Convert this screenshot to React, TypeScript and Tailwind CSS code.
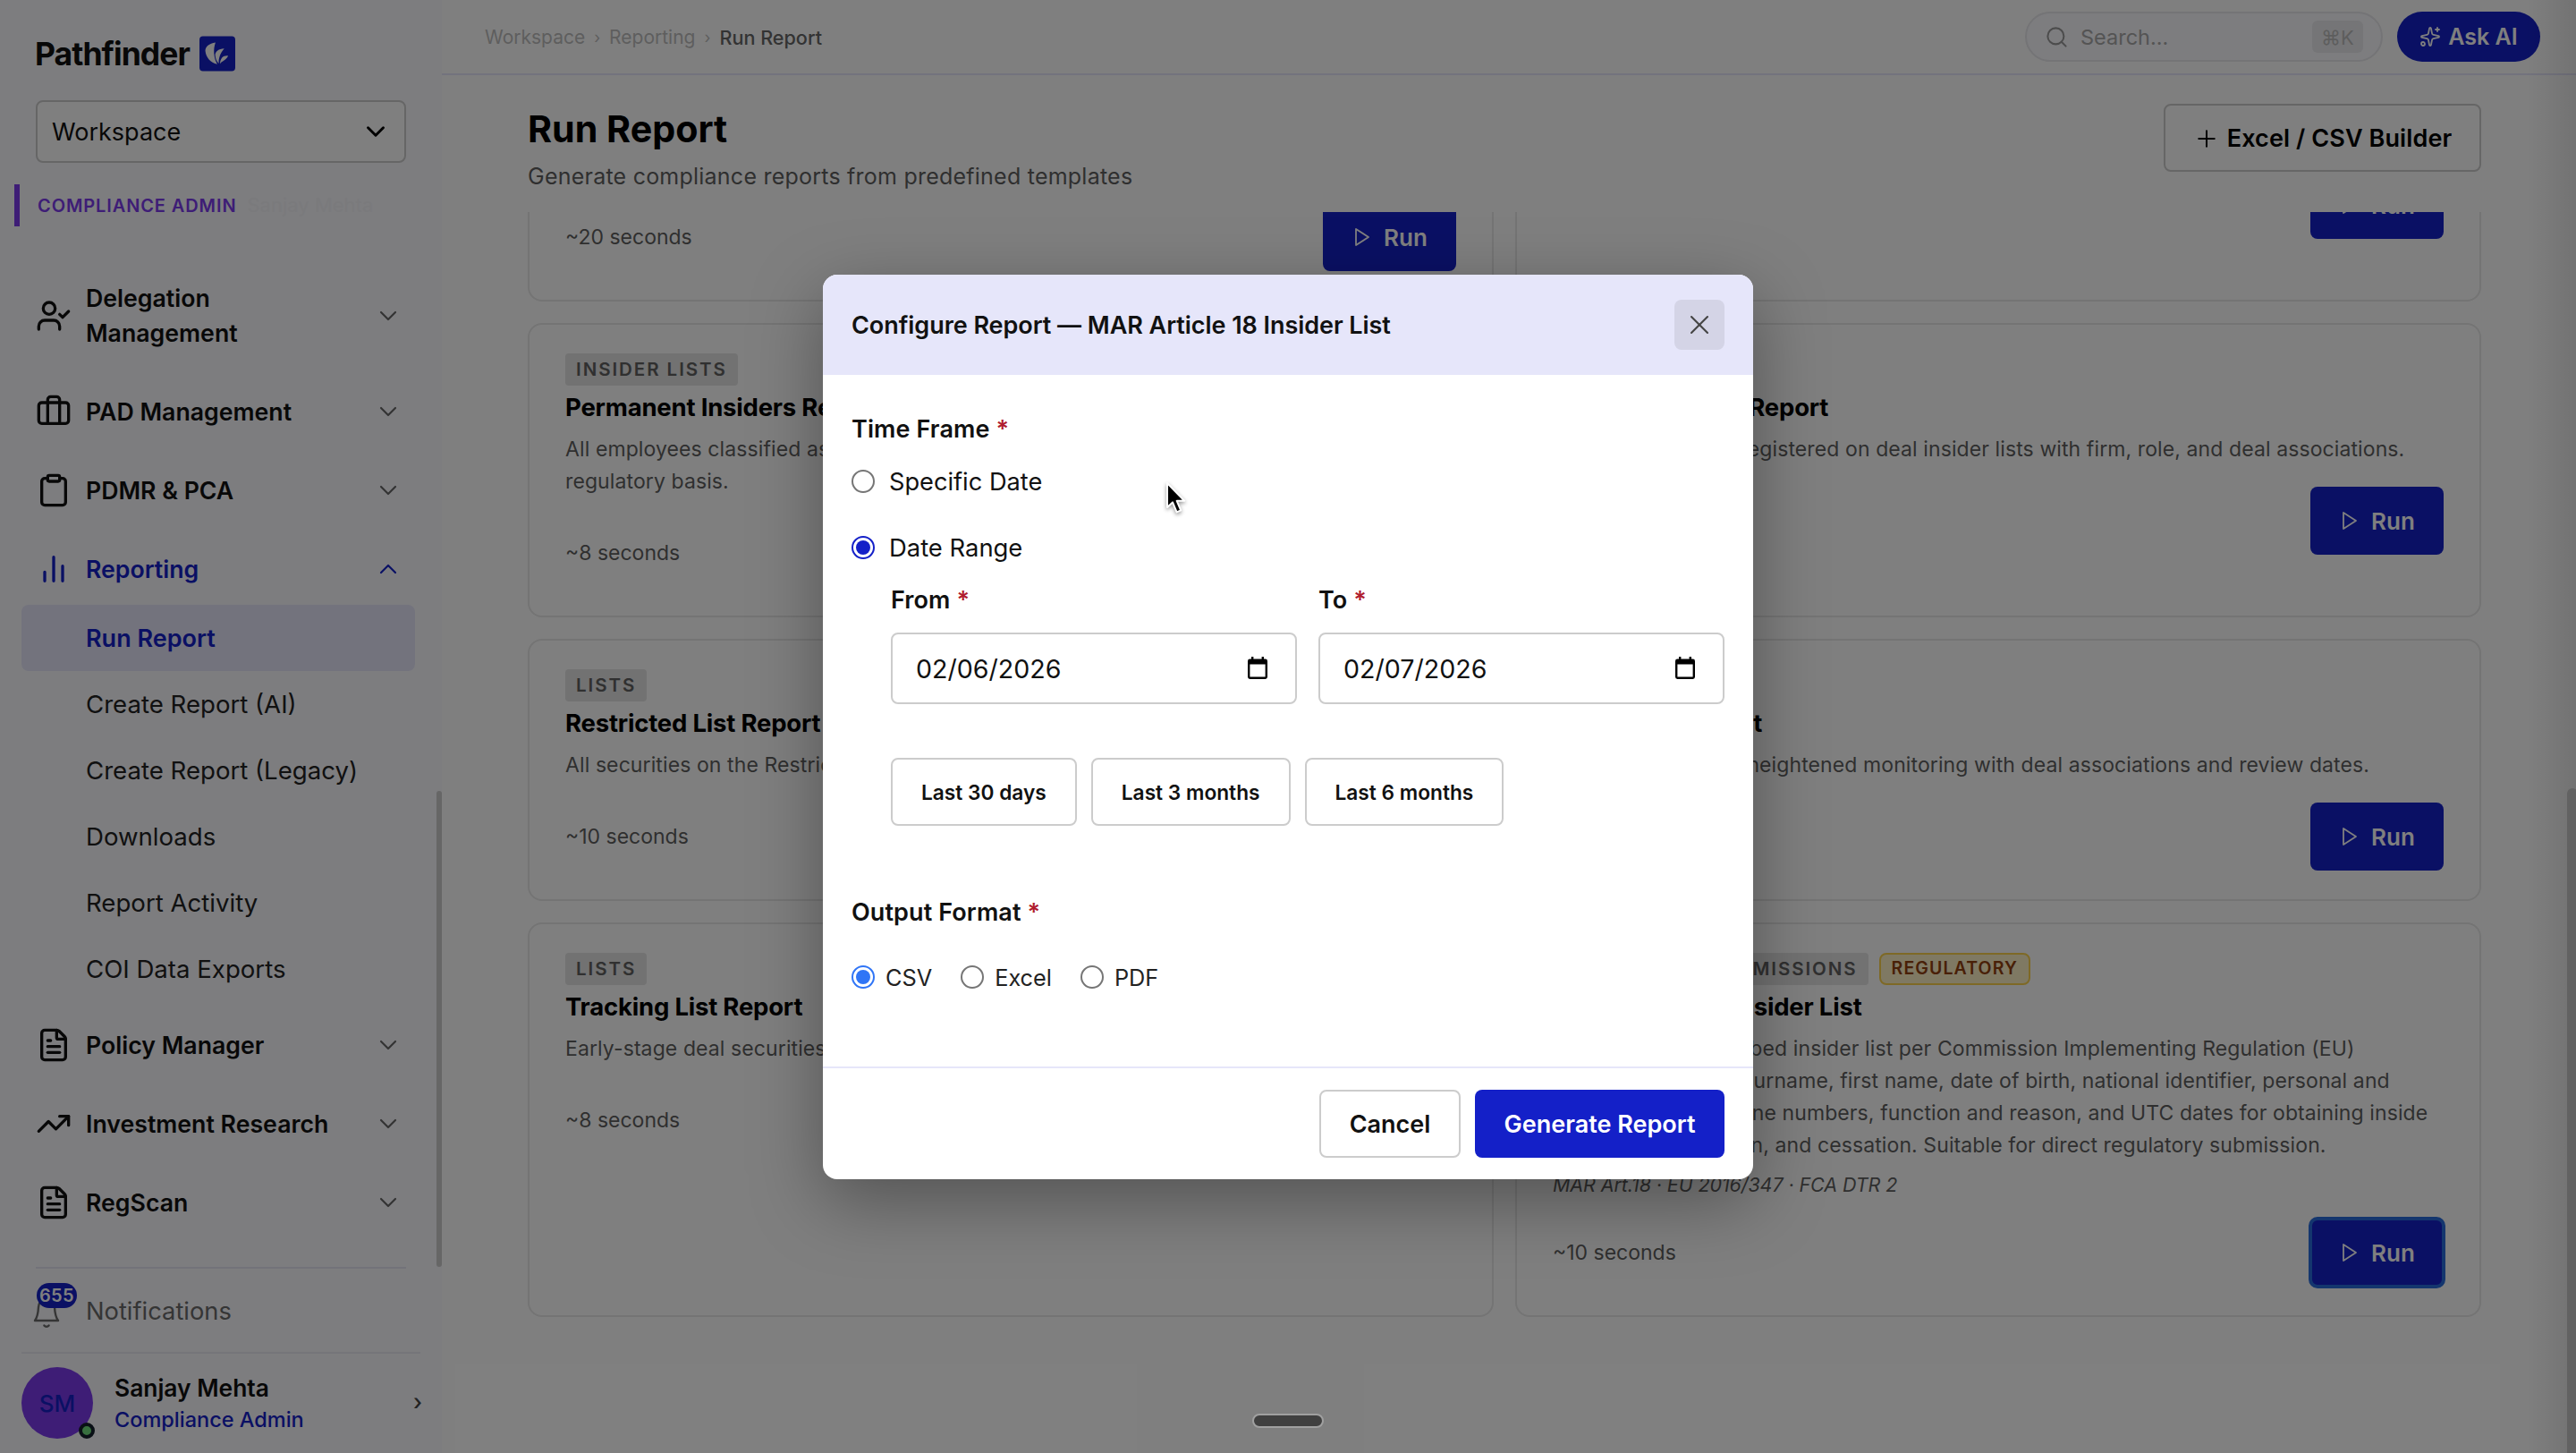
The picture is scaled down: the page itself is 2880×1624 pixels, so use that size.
import { useState, type ReactNode } from 'react'
import {
  Briefcase,
  ChevronDown,
  ChevronUp,
  Clipboard,
  FileText,
  Plus,
  Search,
  Sparkles,
  TrendingUp,
  UserCheck,
  X,
} from 'lucide-react'

const SUB_ITEMS = [
  'Run Report',
  'Create Report (AI)',
  'Create Report (Legacy)',
  'Downloads',
  'Report Activity',
  'COI Data Exports',
]

const PRESETS = ['Last 30 days', 'Last 3 months', 'Last 6 months']
const FORMATS = ['CSV', 'Excel', 'PDF']

function Logo() {
  return (
    <svg width="40" height="40" viewBox="0 0 41 40">
      <rect width="41" height="40" rx="4" fill="#1420c8" />
      <g fill="#fff">
        <path d="M18.4 7.3C11 8.5 6.8 12 6.7 16.6C7.4 24 12.6 30.6 20.4 32C16.4 25.4 15.4 15 18.4 7.3Z" />
        <path d="M28.4 14C22 14.2 18.2 17.2 18 21.4C18.2 25.4 19.6 29 22.2 31.4C21.6 25.6 23.8 19 28.4 14Z" />
        <path d="M32.8 22.4C27.2 21.8 23.8 25 23.6 31.8C25.2 28.6 31.2 27.4 32.8 22.4Z" />
      </g>
    </svg>
  )
}

function BarsIcon() {
  return (
    <svg width="40" height="40" viewBox="0 0 24 24" fill="none" stroke="currentColor" strokeWidth="2" strokeLinecap="round">
      <path d="M18 20V10M12 20V4M6 20v-6" />
    </svg>
  )
}

function PlayIcon() {
  return (
    <svg width="24" height="24" viewBox="0 0 24 24" fill="none" stroke="currentColor" strokeWidth="1.8" strokeLinejoin="round">
      <path d="M5 3l14 9-14 9z" />
    </svg>
  )
}

function BellIcon() {
  return (
    <svg width="32" height="40" viewBox="0 0 32 40" fill="none" stroke="currentColor" strokeWidth="2.4" strokeLinecap="round" strokeLinejoin="round">
      <path d="M3 31h26c-3-4-3.6-8-4-15a9 9 0 0 0-18 0c-.4 7-1 11-4 15z" />
      <path d="M13.4 36.4c1.4 1.8 3.8 1.8 5.2 0" />
    </svg>
  )
}

function CalendarIcon() {
  return (
    <svg width="24" height="26" viewBox="0 0 24 26">
      <path
        fillRule="evenodd"
        fill="#000"
        d="M5 0h2.4v2.6h9.2V0H19v2.6h1.6A2.4 2.4 0 0 1 23 5v17.6A2.4 2.4 0 0 1 20.6 25H3.4A2.4 2.4 0 0 1 1 22.6V5a2.4 2.4 0 0 1 2.4-2.4H5zM3.4 8.6v14h17.2v-14z"
      />
    </svg>
  )
}

interface NavRowProps {
  icon: ReactNode
  label: string
  open?: boolean
  tall?: boolean
}

function NavRow({ icon, label, open, tall }: NavRowProps) {
  return (
    <div
      className={`flex items-center pl-10 pr-11 mb-2 shrink-0 ${tall ? 'h-[120px] pt-0.5' : 'h-20'} ${open ? 'text-[#1420c8]' : 'text-[#111]'}`}
    >
      <span className="w-14 shrink-0">{icon}</span>
      <span className={`flex-1 text-[26.7px] leading-[39px] font-semibold ${tall ? 'pr-20' : ''}`}>{label}</span>
      {open ? (
        <ChevronUp size={32} strokeWidth={1.6} />
      ) : (
        <ChevronDown size={32} strokeWidth={1.6} className="text-[#666]" />
      )}
    </div>
  )
}

function Sidebar() {
  return (
    <aside className="relative w-[494px] h-full shrink-0 bg-[#fafaff] flex flex-col">
      <div className="h-[112px] pl-[39px] pt-10 flex gap-[13px] items-start">
        <span className="text-[35.5px] leading-[41px] font-bold tracking-[-0.95px] text-[#111] w-[171px]">Pathfinder</span>
        <Logo />
      </div>
      <div className="ml-10 w-[414px] h-[70px] shrink-0 bg-white border-2 border-[#ccc] rounded-lg flex items-center justify-between pl-4 pr-[15px]">
        <span className="pt-0.5 text-[27px] text-[#111]">Workspace</span>
        <ChevronDown size={34} strokeWidth={2.1} />
      </div>
      <div className="mt-6 ml-4 h-[47px] shrink-0 border-l-[6px] border-[#7c3aed] pl-5 flex items-center gap-3">
        <span className="text-[20px] font-semibold tracking-[0.9px] text-[#7c3aed]">COMPLIANCE ADMIN</span>
        <span className="text-[22px] text-[#f4f4f8]">Sanjay Mehta</span>
      </div>

      <nav className="mt-[39px] flex flex-col">
        <NavRow icon={<UserCheck size={40} />} label="Delegation Management" tall />
        <NavRow icon={<Briefcase size={40} />} label="PAD Management" />
        <NavRow icon={<Clipboard size={40} />} label="PDMR & PCA" />
        <NavRow icon={<BarsIcon />} label="Reporting" open />
        <div className="-mt-2 mb-2">
          {SUB_ITEMS.map((item, i) => (
            <div
              key={item}
              className={`mx-6 w-[440px] h-[74px] pl-[72px] pt-0.5 flex items-center rounded-lg ${i === 0 ? 'bg-[#e6e6fa] text-[#1420c8] text-[27px] font-semibold' : 'text-[27.6px] text-[#222]'}`}
            >
              {item}
            </div>
          ))}
        </div>
        <NavRow icon={<FileText size={40} />} label="Policy Manager" />
        <NavRow icon={<TrendingUp size={40} />} label="Investment Research" />
        <NavRow icon={<FileText size={40} />} label="RegScan" />
      </nav>

      <div className="mt-6 mx-10 border-t-2 border-[#e6e6f2]" />
      <div className="h-[93px] shrink-0 pl-9 flex items-center text-[#6b6b6b]">
        <div className="relative w-[60px]">
          <BellIcon />
          <span className="absolute left-[5px] -top-[11px] h-7 w-[45px] rounded-full bg-[#1420c8] text-white text-[20px] font-semibold tracking-[0.4px] flex items-center justify-center">
            655
          </span>
        </div>
        <span className="pt-1 text-[27.3px]">Notifications</span>
      </div>
      <div className="ml-6 w-[446px] border-t-2 border-[#eaeaf2]" />
      <div className="pt-[15px] pl-6 pr-[22px] flex items-center">
        <div className="relative size-20 rounded-full bg-[#7c3aed] flex items-center justify-center text-[26px] font-medium text-[#1420c8]">
          SM
          <span className="absolute -right-[2px] bottom-0 size-[18px] rounded-full bg-[#70e07e] border-4 border-[#15202c]" />
        </div>
        <div className="ml-6 pt-0.5 flex-1">
          <div className="text-[26.4px] leading-9 font-semibold text-[#111]">Sanjay Mehta</div>
          <div className="text-[23.5px] leading-9 font-medium text-[#1420c8]">Compliance Admin</div>
        </div>
        <span className="text-[25px] font-medium text-[#444]">›</span>
      </div>
      <div className="absolute right-0 top-[884px] w-[6px] h-[532px] rounded-full bg-[#ccc]" />
    </aside>
  )
}

function TopBar() {
  return (
    <header className="h-[84px] shrink-0 border-b-2 border-[#e6e6fa] pl-12 pr-10 flex items-center">
      <div className="flex-1 flex items-center gap-2.5 pt-0.5 text-[21px] text-[#bdbdbd]">
        <span>Workspace</span>
        <span className="text-[18px]">›</span>
        <span>Reporting</span>
        <span className="text-[18px]">›</span>
        <span className="text-[21.6px] text-[#666] font-medium">Run Report</span>
      </div>
      <div className="w-[400px] h-14 rounded-full bg-[#fafaff] border-2 border-[#e8e8ec] pl-5 pr-5 flex items-center">
        <Search size={27} strokeWidth={1.8} className="text-[#999]" />
        <span className="ml-[13px] flex-1 pt-0.5 text-[23.5px] text-[#a8a8a8]">Search...</span>
        <span className="w-[57px] h-9 pt-0.5 rounded-md bg-[#ebebef] text-[22px] text-[#bbb] flex items-center justify-center">⌘K</span>
      </div>
      <button className="ml-4 w-40 h-14 rounded-full bg-[#1420c8] text-white text-[25px] font-semibold flex items-center justify-center gap-2">
        <Sparkles size={24} strokeWidth={1.8} />
        <span className="pt-0.5">Ask AI</span>
      </button>
    </header>
  )
}

function RunButton({ focused }: { focused?: boolean }) {
  return (
    <button
      className={`w-[149px] h-[76px] rounded-lg bg-[#1420c8] text-white text-[26px] font-semibold flex items-center justify-center gap-3 ${focused ? 'outline-4 -outline-offset-2 outline-[#286cdc]' : ''}`}
    >
      <PlayIcon />
      Run
    </button>
  )
}

function CardFooter({ time, focused }: { time: string; focused?: boolean }) {
  return (
    <div className="h-[76px] flex items-center justify-between">
      <span className="text-[23px] text-[#5f5f5f]">{time}</span>
      <RunButton focused={focused} />
    </div>
  )
}

interface ReportCardProps {
  tag: string
  title: string
  lines: string[]
  time: string
  regulatory?: boolean
  reference?: string
}

function ReportCard({ tag, title, lines, time, regulatory, reference }: ReportCardProps) {
  return (
    <div className="border-2 border-[#e8e8e8] rounded-2xl px-10 py-8">
      <div className="flex gap-3">
        <span className="h-9 px-3 rounded bg-[#e4e4e4] text-[20.5px] font-semibold tracking-[1.95px] text-[#606060] flex items-center">
          {tag}
        </span>
        {regulatory && (
          <span className="h-9 px-3 rounded-lg bg-[#fef3c7] border-2 border-[#fcd34d] text-[19.5px] font-semibold tracking-[1.1px] text-[#92400e] flex items-center">
            REGULATORY
          </span>
        )}
      </div>
      <h3 className="mt-1.5 mb-[11px] h-9 leading-9 text-[27.5px] font-bold tracking-[-0.2px] text-black">{title}</h3>
      <div className="text-[23px] leading-9 tracking-[0.1px] text-[#5f5f5f]">
        {lines.map((line) => (
          <p key={line} className="whitespace-nowrap">{line}</p>
        ))}
      </div>
      {reference && (
        <p className="mt-2.5 mb-[22px] h-8 leading-8 text-[21.5px] tracking-[-0.1px] italic text-[#5f5f5f]">{reference}</p>
      )}
      <div className={reference ? '' : 'mt-6'}>
        <CardFooter time={time} focused={!!reference} />
      </div>
    </div>
  )
}

function Reports() {
  return (
    <main className="flex-1 min-h-0 flex flex-col">
      <div className="h-[153px] shrink-0 pl-24 pr-[106px] flex justify-between">
        <div className="pt-9">
          <h1 className="text-[41.2px] leading-[48px] font-bold text-black">Run Report</h1>
          <p className="mt-[11px] text-[25px] leading-[36px] tracking-[0.23px] text-[#5f5f5f]">
            Generate compliance reports from predefined templates
          </p>
        </div>
        <button className="mt-8 w-[355px] h-[76px] pt-0.5 border-2 border-[#ccc] rounded-lg text-[27px] font-semibold text-black flex items-center justify-center gap-2">
          <Plus size={30} strokeWidth={1.6} />
          <span className="tracking-[0.1px]">Excel / CSV Builder</span>
        </button>
      </div>

      <div className="flex-1 min-h-0 overflow-hidden pl-24 pr-[106px]">
        <div className="grid grid-cols-2 gap-6">
          <div className="border-2 border-t-0 border-[#e8e8e8] rounded-b-2xl px-10 h-[100px]">
            <div className="-mt-[10px]"><CardFooter time="~20 seconds" /></div>
          </div>
          <div className="border-2 border-t-0 border-[#e8e8e8] rounded-b-2xl px-10 h-[100px]">
            <div className="-mt-[46px]"><CardFooter time="~12 seconds" /></div>
          </div>
          <ReportCard
            tag="INSIDER LISTS"
            title="Permanent Insiders Report"
            lines={['All employees classified as permanent insiders with', 'regulatory basis.']}
            time="~8 seconds"
          />
          <ReportCard
            tag="INSIDER LISTS"
            title="All Deal Insiders Report"
            lines={['All new individuals registered on deal insider lists with firm, role, and deal associations.']}
            time="~8 seconds"
          />
          <ReportCard
            tag="LISTS"
            title="Restricted List Report"
            lines={['All securities on the Restricted List']}
            time="~10 seconds"
          />
          <ReportCard
            tag="LISTS"
            title="Watch List Report"
            lines={['All securities under heightened monitoring with deal associations and review dates.']}
            time="~8 seconds"
          />
          <ReportCard
            tag="LISTS"
            title="Tracking List Report"
            lines={['Early-stage deal securities']}
            time="~8 seconds"
          />
          <ReportCard
            tag="REGULATORY SUBMISSIONS"
            title="MAR Article 18 Insider List"
            lines={[
              'Detailed and prescribed insider list per Commission Implementing Regulation (EU)',
              '2016/347. Lists the surname, first name, date of birth, national identifier, personal and',
              'professional telephone numbers, function and reason, and UTC dates for obtaining inside',
              'information, inclusion, and cessation. Suitable for direct regulatory submission.',
            ]}
            time="~10 seconds"
            reference="MAR Art.18 · EU 2016/347 · FCA DTR 2"
            regulatory
          />
        </div>
      </div>
    </main>
  )
}

function Radio({ checked, light }: { checked: boolean; light?: boolean }) {
  if (!checked) return <span className="size-[26px] rounded-full border-2 border-[#767676] bg-white" />
  return (
    <span
      className={`size-[26px] rounded-full border-2 flex items-center justify-center ${light ? 'border-[#3075f6]' : 'border-[#1420c8]'}`}
    >
      <span className={`size-4 rounded-full ${light ? 'bg-[#3075f6]' : 'bg-[#1420c8]'}`} />
    </span>
  )
}

function Label({ children }: { children: ReactNode }) {
  return (
    <div className="text-[27px] leading-9 font-semibold tracking-[0.1px] text-[#111]">
      {children} <span className="text-[#b01c2e]">*</span>
    </div>
  )
}

function DateField({ label, value }: { label: string; value: string }) {
  return (
    <div className="w-[454px]">
      <Label>{label}</Label>
      <div className="mt-[18px] h-20 border-2 border-[#ccc] rounded-lg pl-[26px] pr-[30px] flex items-center justify-between">
        <span className="pt-0.5 text-[28.6px] text-[#111]">{value}</span>
        <CalendarIcon />
      </div>
    </div>
  )
}

function ConfigureModal() {
  const [mode, setMode] = useState('range')
  const [format, setFormat] = useState('CSV')

  return (
    <div className="w-[1040px] h-[1011px] rounded-2xl overflow-hidden bg-white shadow-[0_24px_80px_rgba(0,0,0,0.35)] flex flex-col">
      <div className="h-28 shrink-0 bg-[#e6e6fa] px-8 flex items-center justify-between">
        <h2 className="pt-0.5 text-[27px] font-semibold tracking-[-0.05px] text-[#111]">Configure Report — MAR Article 18 Insider List</h2>
        <button className="size-14 rounded-lg bg-[#d4d4e6] flex items-center justify-center text-[#444]">
          <X size={36} strokeWidth={1.4} />
        </button>
      </div>

      <div className="flex-1 px-8 pt-[43px]">
        <Label>Time Frame</Label>
        <div className="mt-[22px] h-9 flex items-center gap-4" onClick={() => setMode('specific')}>
          <Radio checked={mode === 'specific'} />
          <span className="pt-0.5 text-[27.2px] text-[#111]">Specific Date</span>
        </div>
        <div className="mt-[38px] h-9 flex items-center gap-4" onClick={() => setMode('range')}>
          <Radio checked={mode === 'range'} />
          <span className="pt-0.5 text-[27.4px] text-[#111]">Date Range</span>
        </div>
        <div className="mt-[23px] ml-11 flex gap-6">
          <DateField label="From" value="02/06/2026" />
          <DateField label="To" value="02/07/2026" />
        </div>
        <div className="mt-[60px] ml-11 flex gap-4">
          {PRESETS.map((p) => (
            <button key={p} className="h-[76px] px-8 pt-0.5 border-2 border-[#ccc] rounded-lg text-[22.7px] font-semibold text-[#111]">
              {p}
            </button>
          ))}
        </div>
        <div className="mt-[79px]">
          <Label>Output Format</Label>
        </div>
        <div className="mt-[36px] h-9 flex items-center gap-8">
          {FORMATS.map((f) => (
            <div key={f} className="flex items-center gap-3" onClick={() => setFormat(f)}>
              <Radio checked={format === f} light />
              <span className="pt-0.5 text-[25.3px] text-[#222]">{f}</span>
            </div>
          ))}
        </div>
      </div>

      <div className="h-[126px] shrink-0 border-t-2 border-[#e6e6fa] px-8 flex items-center justify-end gap-4">
        <button className="w-[158px] h-[76px] pt-0.5 border-2 border-[#ccc] rounded-lg text-[27px] font-semibold text-[#111]">Cancel</button>
        <button className="w-[279px] h-[76px] pt-0.5 rounded-lg bg-[#1420c8] text-[27px] font-semibold text-white">Generate Report</button>
      </div>
    </div>
  )
}

function Cursor() {
  return (
    <svg
      className="absolute left-[1301px] top-[534px] drop-shadow-[0_2px_2px_rgba(0,0,0,0.4)]"
      width="30"
      height="46"
      viewBox="0 0 30 46"
    >
      <path
        d="M4 6v27l6-5.6 4.6 11 4.6-2-4.5-10.6h8.5z"
        fill="#000"
        stroke="#fff"
        strokeWidth="2"
        strokeLinejoin="round"
      />
    </svg>
  )
}

export default function App() {
  return (
    <div className="relative w-[2880px] h-[1624px] overflow-hidden bg-white font-['Inter',sans-serif]">
      <div className="h-full flex">
        <Sidebar />
        <div className="flex-1 flex flex-col">
          <TopBar />
          <Reports />
        </div>
      </div>

      {/* Page scrollbar and edge shade */}
      <div className="absolute right-0 top-0 h-full w-14 bg-linear-to-r from-transparent to-black/10" />
      <div className="absolute -right-[2px] top-[881px] w-3 h-[760px] rounded-full bg-[#c4c4c4]" />

      <div className="absolute inset-0 bg-black/50 flex justify-center pt-[307px]">
        <ConfigureModal />
      </div>
      <div className="absolute left-[1400px] top-[1580px] w-20 h-4 rounded-full bg-[#404040] border-2 border-[#a0a0a0]" />
      <Cursor />
    </div>
  )
}
